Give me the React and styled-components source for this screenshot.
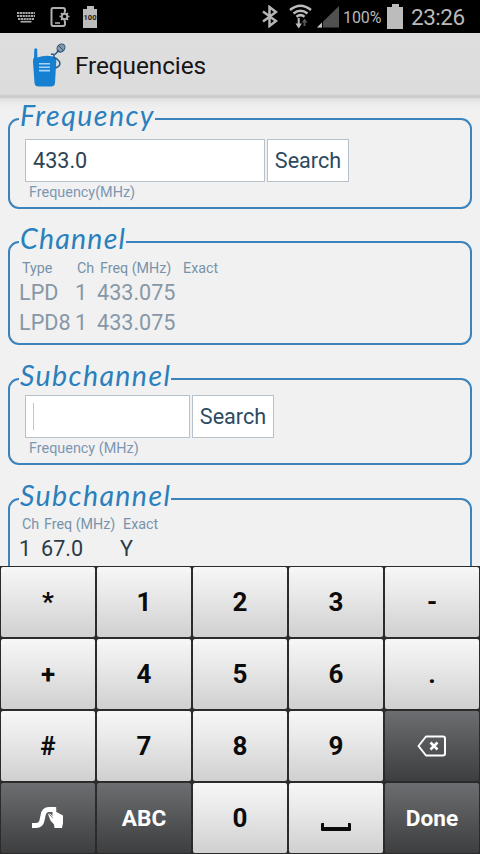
import React from 'react';
import styled, { createGlobalStyle } from 'styled-components';

const GlobalStyle = createGlobalStyle`
  * {
    box-sizing: border-box;
  }
  body {
    margin: 0;
    background-color: #f1f1f2;
    font-family: Roboto, 'Liberation Sans', sans-serif;
  }
`;

const Screen = styled.div`
  display: flex;
  flex-direction: column;
  width: 480px;
  height: 854px;
  overflow: hidden;
  background-color: #f1f1f2;
`;

const StatusBar = styled.header`
  display: flex;
  flex: none;
  justify-content: space-between;
  height: 33px;
  padding: 0 15px 0 16px;
  background-color: #000000;
  color: #b9b9b9;
`;

const StatusGroup = styled.div`
  display: flex;
  align-items: center;
`;

const StatusIcon = styled.svg`
  display: block;
  flex: none;
  margin-right: ${(props) => props.$gap || 0}px;
`;

const Percent = styled.span`
  width: 44px;
  padding-top: 1px;
  font-size: 16px;
  letter-spacing: -0.1px;
  line-height: 33px;
`;

const Clock = styled.span`
  width: 54px;
  font-size: 22.5px;
  letter-spacing: -0.5px;
  line-height: 34px;
  white-space: nowrap;
`;

const TitleBar = styled.div`
  display: flex;
  flex: none;
  align-items: center;
  height: 65px;
  padding-left: 31px;
  background: linear-gradient(#dedede, #dcdcdc 61px, #cbcbcb 63px, #cecece);
`;

const Title = styled.h1`
  margin: 1px 0 0 9px;
  font-size: 24.4px;
  font-weight: 400;
  letter-spacing: -0.1px;
  line-height: 66px;
  color: #151515;
`;

const Content = styled.main`
  flex: 1;
  min-height: 0;
  overflow: hidden;
  padding: 9px 8px 0;
  background: linear-gradient(#dddddd, #ececed 6px, #f1f1f2 14px);
`;

const Group = styled.fieldset`
  min-width: 0;
  height: ${(props) => props.$height}px;
  margin: 0 0 ${(props) => props.$gap || 0}px;
  padding: 0 0 0 9px;
  border: 2px solid #3a83bd;
  border-radius: 11px;
`;

const Legend = styled.legend`
  width: ${(props) => props.$width}px;
  height: 24px;
  padding: 0 0 0 1px;
  font-family: Lato, 'Open Sans', sans-serif;
  font-size: 28.5px;
  font-style: italic;
  font-weight: 400;
  line-height: 17px;
  letter-spacing: ${(props) => props.$spacing}px;
  white-space: nowrap;
  color: #2a80bc;
`;

const SearchRow = styled.form`
  display: flex;
  gap: 2px;
  margin: ${(props) => props.$top}px 0 0 6px;
`;

const Field = styled.div`
  display: flex;
  align-items: center;
  width: ${(props) => props.$width}px;
  height: 43px;
  padding-left: 7px;
  border: 1px solid #b5c1cc;
  background-color: #ffffff;
  font-size: 21.6px;
  color: #2f4250;
`;

const Caret = styled.span`
  width: 1px;
  height: 27px;
  background-color: #c3c6c9;
`;

const SearchButton = styled.button`
  width: 82px;
  height: 43px;
  padding: 0;
  border: 1px solid #b5c1cc;
  background-color: #ffffff;
  font-family: inherit;
  font-size: 21.6px;
  color: #2c4a62;
`;

const Hint = styled.div`
  margin: 2px 0 0 10px;
  font-size: 14.4px;
  line-height: 18px;
  color: #7c97b2;
`;

const Table = styled.div`
  margin-top: ${(props) => props.$top}px;
`;

const HeadRow = styled.div`
  display: grid;
  grid-template-columns: ${(props) => props.$columns};
  height: 17px;
  padding-left: 3px;
  font-size: 14.3px;
  line-height: 17px;
  white-space: nowrap;
  color: #7893a9;
`;

const DataRow = styled.div`
  display: grid;
  grid-template-columns: ${(props) => props.$columns};
  height: 30px;
  font-size: 21.6px;
  line-height: 31px;
  white-space: nowrap;
  color: ${(props) => (props.$dim ? '#8797a5' : '#2b3b48')};
`;

const Keyboard = styled.div`
  display: grid;
  flex: none;
  grid-template-columns: repeat(5, 94px);
  grid-template-rows: repeat(4, 70px);
  gap: 2px;
  height: 288px;
  padding: 1px;
  background-color: #2b2b2c;
`;

const Key = styled.button`
  display: flex;
  align-items: center;
  justify-content: center;
  padding: 0;
  border: 0;
  border-radius: 2px;
  background: ${(props) => (props.$dark
    ? 'linear-gradient(#6c6e71, #56585a 45%, #3d3e3f)'
    : 'linear-gradient(#f7f7f7, #e5e5e5 48%, #d0d0d0)')};
  font-family: Roboto, sans-serif;
  font-size: ${(props) => (props.$dark ? 22.6 : 26)}px;
  font-weight: 700;
  color: ${(props) => (props.$dark ? '#ffffff' : '#0b0b0b')};
`;

const KeyboardIcon = () => (
  <StatusIcon $gap={14} width="20" height="12" viewBox="0 0 20 12">
    <path d="M1 2h18M1 5h18M2 8h16" stroke="#a8a8a8" strokeWidth="2.200" strokeDasharray="2.200 0.600" />
    <path d="M4.500 10.700h11" stroke="#a8a8a8" strokeWidth="1.700" />
  </StatusIcon>
);

const DeviceIcon = () => (
  <StatusIcon $gap={12} width="21" height="20" viewBox="0 0 21 20" fill="none" stroke="#b0b0b0">
    <path d="M15 5V3Q15 1 13 1H3Q1.500 1 1.500 3V17Q1.500 19 3 19H13Q15 19 15 17V14" strokeWidth="2" />
    <path d="M5 16h5" strokeWidth="1.500" />
    <circle cx="14.500" cy="9.500" r="2.800" strokeWidth="2" />
    <path d="M14.500 4.500v2M14.500 12.500v2M9.500 9.500h2M17.500 9.500h2M11 6l1.300 1.300M18 6l-1.300 1.300M11 13l1.300-1.300M18 13l-1.300-1.300" strokeWidth="1.700" />
  </StatusIcon>
);

const BatteryBadge = styled.div`
  display: flex;
  flex-direction: column;
  align-items: center;
  &::before {
    content: '';
    width: 7px;
    height: 3px;
    background-color: #bcbcbc;
  }
`;

const BatteryLevel = styled.div`
  width: 14px;
  height: 19px;
  background-color: #bcbcbc;
  color: #202020;
  font-size: 7.5px;
  font-weight: 700;
  line-height: 18px;
  text-align: center;
`;

const BluetoothIcon = () => (
  <StatusIcon $gap={11} width="16" height="23" viewBox="0 0 16 23" fill="none" stroke="#b5b5b5" strokeWidth="2.500">
    <path d="M1 6.500L14 16L7.500 21V2L14 7L1 16.500" />
  </StatusIcon>
);

const WifiIcon = () => (
  <StatusIcon $gap={5} width="23" height="25" viewBox="0 0 23 25" fill="none" stroke="#bdbdbd">
    <path d="M1 6Q11.500-2.500 22 6M4.500 9.500Q11.500 4 18.500 9.500M7.500 12.700Q11.500 9.500 15.500 12.700" strokeWidth="2.500" />
    <path d="M9.700 14V21" strokeWidth="2" />
    <path d="M6.500 19.500h6.400L9.700 24.500z" fill="#bdbdbd" stroke="none" />
    <path d="M15.500 22V18" stroke="#565656" strokeWidth="2" />
    <path d="M12.600 18.500h6L15.500 14.500z" fill="#565656" stroke="none" />
  </StatusIcon>
);

const SignalIcon = () => (
  <StatusIcon $gap={4} width="22" height="22" viewBox="0 0 22 22">
    <path d="M22 0V21.500H0z" fill="#505050" />
    <path d="M5 16.500V21.500H0z" fill="#c4c4c4" />
    <path d="M5.500 15v7" stroke="#000" />
  </StatusIcon>
);

const BatteryIcon = () => (
  <StatusIcon $gap={8} width="16" height="25" viewBox="0 0 16 25" fill="#bcbcbc">
    <path d="M5 0h7v3h4v22H0V3h5z" />
  </StatusIcon>
);

const RadioLogo = () => (
  <svg width="35" height="45" viewBox="0 0 35 45" fill="none">
    <path d="M3.300 6Q4.800 4.300 6.200 6L6.400 14.500Q14 11.500 22 13.500Q25.500 14.500 25.300 18L24 40Q23.600 43.500 20 43.500H7.500Q4 43.500 3.500 40L2 19Q1.800 15.500 3 14.500z" fill="#1580d2" />
    <path d="M8 20.800h11M8 24.200h11M8 27.600h11" stroke="#a9d4f5" strokeWidth="1.600" />
    <path d="M20 11l3 .5v3l3 1.500Q31 20 27.500 23.500L24.500 25M24 11.500L28 7" stroke="#225c8b" strokeWidth="1.500" />
    <ellipse cx="30" cy="5" rx="3.600" ry="4.400" transform="rotate(40 30 5)" fill="#8799a8" stroke="#2e5475" />
    <path d="M26.500 6.500l3 3M28 3l4 4" stroke="#2e5475" strokeWidth="1" />
  </svg>
);

const SwipeIcon = () => (
  <svg width="32" height="24" viewBox="0 0 32 24">
    <path d="M0 19.500H4Q9 19.500 10 14.500L11 9.500Q12 3.500 17 3.500H21" fill="none" stroke="#fff" strokeWidth="5" />
    <path d="M20.500 1H23.500Q24.500 1 24.500 3V6L31 9.500V17L30 22H22.500L22 18.500L18.500 14.500L16 8L18 7.500L20.500 10z" fill="#fff" />
    <path d="M16.500 7.200l4.300 4.800" fill="none" stroke="#606265" strokeWidth="0.800" />
    <path d="M24.600 2v4" stroke="#606265" strokeWidth="0.600" />
  </svg>
);

const DeleteIcon = () => (
  <svg width="30" height="22" viewBox="0 0 30 22" fill="none" stroke="#fff" strokeWidth="2">
    <path d="M9 1.500H26Q28 1.500 28 3.500V18.500Q28 20.500 26 20.500H9L1.500 11z" strokeLinejoin="round" />
    <path d="M13.500 7.500l7 7M20.500 7.500l-7 7" strokeWidth="2.600" />
  </svg>
);

const SpaceIcon = styled.span`
  width: 30px;
  height: 8px;
  margin-top: 18px;
  border: 4px solid #0b0b0b;
  border-width: 0 3px 4px;
  border-radius: 1px;
`;

const keys = [
  { label: '*' }, { label: '1' }, { label: '2' }, { label: '3' }, { label: '-' },
  { label: '+' }, { label: '4' }, { label: '5' }, { label: '6' }, { label: '.' },
  { label: '#' }, { label: '7' }, { label: '8' }, { label: '9' }, { label: <DeleteIcon />, dark: true },
  { label: <SwipeIcon />, dark: true }, { label: 'ABC', dark: true }, { label: '0' }, { label: <SpaceIcon /> }, { label: 'Done', dark: true },
];

const channels = [
  { type: 'LPD', ch: 1, freq: '433.075' },
  { type: 'LPD8', ch: 1, freq: '433.075' },
];

const App = () => (
  <Screen>
    <GlobalStyle />
    <StatusBar>
      <StatusGroup>
        <KeyboardIcon />
        <DeviceIcon />
        <BatteryBadge>
          <BatteryLevel>100</BatteryLevel>
        </BatteryBadge>
      </StatusGroup>
      <StatusGroup>
        <BluetoothIcon />
        <WifiIcon />
        <SignalIcon />
        <Percent>100%</Percent>
        <BatteryIcon />
        <Clock>23:26</Clock>
      </StatusGroup>
    </StatusBar>
    <TitleBar>
      <RadioLogo />
      <Title>Frequencies</Title>
    </TitleBar>
    <Content>
      <Group $height={102} $gap={21}>
        <Legend $width={136} $spacing={1.5}>Frequency</Legend>
        <SearchRow $top={8}>
          <Field $width={240}>433.0</Field>
          <SearchButton type="button">Search</SearchButton>
        </SearchRow>
        <Hint>Frequency(MHz)</Hint>
      </Group>
      <Group $height={115} $gap={22}>
        <Legend $width={107} $spacing={1.2}>Channel</Legend>
        <Table $top={6}>
          <HeadRow $columns="55px 23px 83px 60px">
            <span>Type</span>
            <span>Ch</span>
            <span>Freq (MHz)</span>
            <span>Exact</span>
          </HeadRow>
          {channels.map((row) => (
            <DataRow key={row.type} $columns="56px 22px 100px" $dim>
              <span>{row.type}</span>
              <span>{row.ch}</span>
              <span>{row.freq}</span>
            </DataRow>
          ))}
        </Table>
      </Group>
      <Group $height={98} $gap={22}>
        <Legend $width={152} $spacing={1.4}>Subchannel</Legend>
        <SearchRow $top={4}>
          <Field $width={165}><Caret /></Field>
          <SearchButton type="button">Search</SearchButton>
        </SearchRow>
        <Hint>Frequency (MHz)</Hint>
      </Group>
      <Group $height={110}>
        <Legend $width={152} $spacing={1.4}>Subchannel</Legend>
        <Table $top={5}>
          <HeadRow $columns="22px 79px 60px">
            <span>Ch</span>
            <span>Freq (MHz)</span>
            <span>Exact</span>
          </HeadRow>
          <DataRow $columns="22px 79px 60px">
            <span>1</span>
            <span>67.0</span>
            <span>Y</span>
          </DataRow>
        </Table>
      </Group>
    </Content>
    <Keyboard>
      {keys.map((key, index) => (
        <Key key={index} type="button" $dark={key.dark}>{key.label}</Key>
      ))}
    </Keyboard>
  </Screen>
);

export default App;
